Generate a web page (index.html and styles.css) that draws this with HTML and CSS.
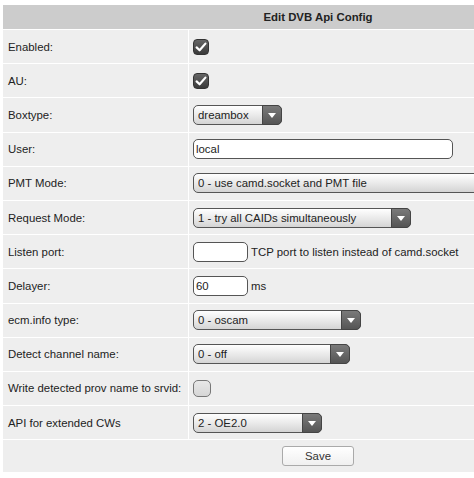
FILE: index.html
```html
<!DOCTYPE html>
<html>
<head>
<meta charset="utf-8">
<link rel="stylesheet" href="styles.css">
</head>
<body>
<table class="config">
  <colgroup>
    <col class="c-lbl">
    <col class="c-val">
  </colgroup>
  <thead>
    <tr><th colspan="2" class="title">Edit DVB Api Config</th></tr>
  </thead>
  <tbody>
    <tr><td class="lbl">Enabled:</td><td class="val"><span class="chk on"><svg viewBox="0 0 16 16" width="16" height="16"><path d="M3.6 8.4 L6.6 11.3 L12.4 4.6" fill="none" stroke="#fff" stroke-width="2.2" stroke-linecap="round" stroke-linejoin="round"/></svg></span></td></tr>
    <tr><td class="lbl">AU:</td><td class="val"><span class="chk on"><svg viewBox="0 0 16 16" width="16" height="16"><path d="M3.6 8.4 L6.6 11.3 L12.4 4.6" fill="none" stroke="#fff" stroke-width="2.2" stroke-linecap="round" stroke-linejoin="round"/></svg></span></td></tr>
    <tr><td class="lbl">Boxtype:</td><td class="val"><span class="sel w89"><select><option>dreambox</option></select><span class="arr"></span></span></td></tr>
    <tr><td class="lbl">User:</td><td class="val"><input class="txt w260" type="text" value="local"></td></tr>
    <tr><td class="lbl">PMT Mode:</td><td class="val"><span class="sel w330"><select><option>0 - use camd.socket and PMT file</option></select><span class="arr"></span></span></td></tr>
    <tr><td class="lbl">Request Mode:</td><td class="val"><span class="sel w218"><select><option>1 - try all CAIDs simultaneously</option></select><span class="arr"></span></span></td></tr>
    <tr><td class="lbl">Listen port:</td><td class="val"><input class="txt w55" type="text" value=""><span class="note">TCP port to listen instead of camd.socket</span></td></tr>
    <tr><td class="lbl">Delayer:</td><td class="val"><input class="txt w55" type="text" value="60"><span class="note">ms</span></td></tr>
    <tr><td class="lbl">ecm.info type:</td><td class="val"><span class="sel w168"><select><option>0 - oscam</option></select><span class="arr"></span></span></td></tr>
    <tr><td class="lbl">Detect channel name:</td><td class="val"><span class="sel w157"><select><option>0 - off</option></select><span class="arr"></span></span></td></tr>
    <tr><td class="lbl">Write detected prov name to srvid:</td><td class="val"><span class="chk off"></span></td></tr>
    <tr><td class="lbl">API for extended CWs</td><td class="val"><span class="sel w129"><select><option>2 - OE2.0</option></select><span class="arr"></span></span></td></tr>
  </tbody>
  <tfoot>
    <tr><td colspan="2" class="actions"><button class="save" type="button">Save</button></td></tr>
  </tfoot>
</table>
</body>
</html>
```
FILE: styles.css
```css
html, body {
  margin: 0;
  padding: 0;
  background: #fff;
  overflow: hidden;
}
body {
  padding: 4px 0 0 2px;
  font-family: "Liberation Sans", Arial, sans-serif;
  font-size: 11.4px;
  color: #222;
}
.config {
  width: 632px;
  border-collapse: separate;
  border-spacing: 1px;
  table-layout: fixed;
  font-size: 11.4px;
}
.c-lbl {
  width: 185px;
}
.title {
  background: #cccccc;
  height: 24px;
  padding: 0;
  font-weight: bold;
  font-size: 11.4px;
  text-align: center;
  color: #222;
}
.config td {
  background: #eeeeee;
  height: 33.2px;
  padding: 0;
  vertical-align: middle;
}
.config .lbl {
  padding-left: 5px;
  white-space: nowrap;
  color: #222;
}
.config .val {
  padding-left: 4px;
  white-space: nowrap;
}
.chk {
  display: inline-block;
  width: 16px;
  height: 16px;
  border-radius: 4px;
  vertical-align: middle;
  box-sizing: border-box;
}
.chk.on {
  background: linear-gradient(#666, #3a3a3a);
  border: 1px solid #333;
}
.chk.on svg {
  display: block;
  margin: -1px;
}
.chk.off {
  width: 18px;
  height: 17px;
  border: 1px solid #777;
  background: linear-gradient(#e8e8e8, #d6d6d6);
  border-radius: 5px;
}
.sel {
  position: relative;
  display: inline-block;
  vertical-align: middle;
  height: 20px;
}
.sel select {
  appearance: none;
  -webkit-appearance: none;
  width: 100%;
  height: 20px;
  box-sizing: border-box;
  border: 1px solid #555;
  border-radius: 5px;
  background: linear-gradient(#ffffff, #e6e6e6 60%, #d4d4d4);
  font-family: "Liberation Sans", Arial, sans-serif;
  font-size: 11.4px;
  color: #222;
  padding: 0 0 0 4px;
  margin: 0;
  display: block;
}
.sel .arr {
  position: absolute;
  top: 0;
  right: 0;
  width: 20px;
  height: 20px;
  box-sizing: border-box;
  border: 1px solid #444;
  border-radius: 0 5px 5px 0;
  background: linear-gradient(#7a7a7a, #555);
  pointer-events: none;
}
.sel .arr::after {
  content: "";
  position: absolute;
  left: 5px;
  top: 7px;
  border-left: 4px solid transparent;
  border-right: 4px solid transparent;
  border-top: 5px solid #fff;
}
.w89 { width: 89px; }
.w330 { width: 330px; }
.w218 { width: 218px; }
.w168 { width: 168px; }
.w157 { width: 157px; }
.w129 { width: 129px; }
.txt {
  height: 20px;
  box-sizing: border-box;
  border: 1px solid #555;
  border-radius: 5px;
  background: #fff;
  font-family: "Liberation Sans", Arial, sans-serif;
  font-size: 11.4px;
  color: #222;
  padding: 0 2px;
  margin: 0;
  vertical-align: middle;
}
.w260 { width: 260px; }
.w55 { width: 55px; }
.note {
  margin-left: 3px;
  vertical-align: middle;
  color: #222;
}
.config .actions {
  height: 32px;
  text-align: center;
}
.save {
  width: 72px;
  height: 20px;
  border: 1px solid #aaa;
  border-radius: 3px;
  background: linear-gradient(#ffffff, #f0f0f0);
  font-family: "Liberation Sans", Arial, sans-serif;
  font-size: 11.4px;
  color: #333;
  padding: 0;
}
```
